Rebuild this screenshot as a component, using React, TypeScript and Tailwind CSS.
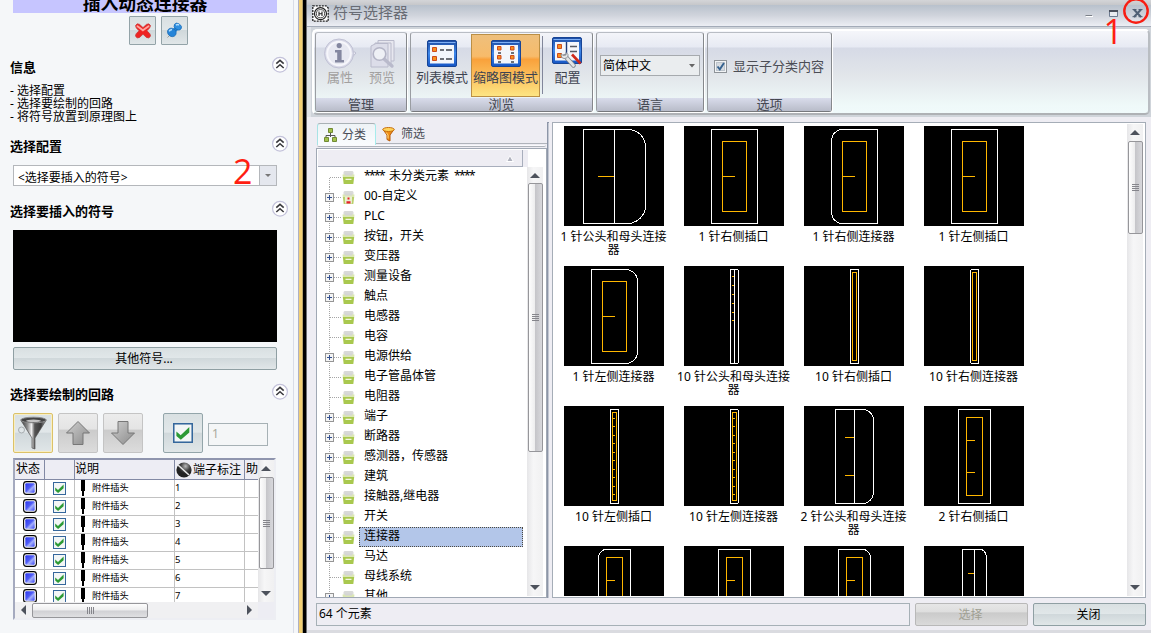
import React from "react";

const SILVER = "bg-[linear-gradient(180deg,#d9e0e2_0%,#e1e7e9_48%,#d0d8db_50%,#e0e6e8_100%)]";
const V_TRACK = "bg-[linear-gradient(90deg,#e6e6e8_0%,#f6f6f7_40%,#f0f0f1_100%)]";
const V_THUMB = "bg-[linear-gradient(90deg,#fdfdfd_0%,#ededee_45%,#c6c6ca_50%,#d8d8dc_100%)]";
const YELLOW = "#ffb700";

function Triangle({ dir }: { dir: "up" | "down" | "left" | "right" }) {
  const d = { up: "M0 5 5 0 10 5Z", down: "M0 0H10L5 5Z", left: "M5 0V10L0 5Z", right: "M0 0 5 5 0 10Z" }[dir];
  const flat = dir === "up" || dir === "down";
  const w = flat ? 10 : 5;
  const h = flat ? 5 : 10;
  return (
    <svg width={w} height={h} viewBox={`0 0 ${w} ${h}`} className="shrink-0">
      <path d={d} fill="#4d525c" />
    </svg>
  );
}

function Grip({ vertical }: { vertical?: boolean }) {
  return (
    <svg width="7" height="7" shapeRendering="crispEdges" className="shrink-0">
      <path
        d={vertical ? "M.5 0V7M2.5 0V7M4.5 0V7M6.5 0V7" : "M0 .5H7M0 2.5H7M0 4.5H7M0 6.5H7"}
        stroke="#85858b"
      />
    </svg>
  );
}

function VScroll({ thumb, button = "h-4" }: { thumb: string; button?: string }) {
  return (
    <div className={`flex w-4 shrink-0 flex-col items-center ${V_TRACK}`}>
      <div className={`flex w-full shrink-0 items-center justify-center ${button}`}>
        <Triangle dir="up" />
      </div>
      <div className={`flex w-[15px] items-center justify-center rounded-[2px] border border-[#96969a] ${V_THUMB} ${thumb}`}>
        <Grip />
      </div>
      <div className="flex-1" />
      <div className="flex h-[18px] items-center justify-center">
        <Triangle dir="down" />
      </div>
    </div>
  );
}

function Heading({ children }: { children: React.ReactNode }) {
  return (
    <div className="flex h-6 items-center justify-between">
      <span className="pt-[5px] text-[13px] leading-[18px] font-bold text-black">{children}</span>
      <svg width="16" height="17" viewBox="0 0 16 17">
        <circle cx="8" cy="8.7" r="7.4" fill="#fff" stroke="#c3c2da" strokeWidth="1.2" />
        <path d="M4.3 7.6 8 4.3 11.7 7.6M4.3 12 8 8.7 11.7 12" fill="none" stroke="#3a3a3e" strokeWidth="1.6" />
      </svg>
    </div>
  );
}

function Check({ size }: { size: number }) {
  return (
    <svg width={size} height={size} viewBox="0 0 13 13">
      <rect x=".5" y=".5" width="12" height="12" fill="#f3f6f6" stroke="#35679c" />
      <path d="M2.2 5.6 5 8 10.6 2.6V6.2L5.1 10.9 2.2 8.4Z" fill="#2c9a35" />
    </svg>
  );
}

function FunnelIcon() {
  return (
    <svg width="32" height="34" viewBox="0 0 32 34">
      <defs>
        <linearGradient id="steel">
          <stop offset="0" stopColor="#3b3b3b" />
          <stop offset=".25" stopColor="#8a8a8a" />
          <stop offset=".42" stopColor="#eee" />
          <stop offset=".55" stopColor="#555" />
          <stop offset=".8" stopColor="#3b3b3b" />
          <stop offset="1" stopColor="#aaa" />
        </linearGradient>
      </defs>
      <circle cx="4.5" cy="14" r="3" fill="none" stroke="#a7adb0" />
      <path d="M4 4.5 15 22v10l3 1V22L29 4.5Z" fill="url(#steel)" stroke="#555" strokeWidth=".7" />
      <ellipse cx="16.5" cy="4" rx="12.8" ry="2.8" fill="#444" stroke="#8c8c8c" />
      <ellipse cx="16.5" cy="4.8" rx="7.5" ry="1.2" fill="#c4c4c4" />
    </svg>
  );
}

function ArrowIcon({ down }: { down?: boolean }) {
  return (
    <svg width="26" height="26" viewBox="0 0 26 26">
      <defs>
        <linearGradient id="arrowGrey" x2="1" y2="1">
          <stop offset="0" stopColor="#cfcfcf" />
          <stop offset="1" stopColor="#8b8b8b" />
        </linearGradient>
      </defs>
      <path
        d={down ? "M8 1.5H18V13H24.5L13 24.5 1.5 13H8Z" : "M8 24.5H18V13H24.5L13 1.5 1.5 13H8Z"}
        fill="url(#arrowGrey)"
        stroke="#777"
      />
    </svg>
  );
}

function CircuitTable() {
  const rows = ["1", "2", "3", "4", "5", "6", "7"];
  return (
    <div className="ml-[3px] flex h-[162px] w-[263px] flex-col border-2 border-t-[#8f95ae] border-r-[#edeef3] border-b-[#edeef3] border-l-[#a5aabf] bg-[#ededf3]">
      <div className="flex h-[142px]">
        <div className="w-[243px] shrink-0 overflow-hidden bg-white text-black">
          <div className="flex h-5 border-b border-[#8289a4] bg-[#ededf4] text-[12px] leading-[18px] whitespace-nowrap">
            <div className="w-[30px] border-r border-[#8289a4] pl-[1px]">状态</div>
            <div className="w-[30px] border-r border-[#8289a4]" />
            <div className="w-[100px] border-r border-[#8289a4]">说明</div>
            <div className="flex w-[70px] items-center border-r border-[#8289a4]">
              <svg width="17" height="16" viewBox="0 0 17 16" className="mr-[1px] shrink-0">
                <defs>
                  <radialGradient id="ball" cx=".6" cy=".25">
                    <stop offset="0" stopColor="#bbb" />
                    <stop offset=".6" stopColor="#444" />
                    <stop offset="1" stopColor="#222" />
                  </radialGradient>
                </defs>
                <circle cx="9" cy="8" r="7.6" fill="url(#ball)" />
                <path d="M3 3 14 13" stroke="#e8e8e8" strokeWidth="1.6" />
              </svg>
              端子标注
            </div>
            <div className="pl-[1px]">助</div>
          </div>
          {rows.map((n) => (
            <div key={n} className="flex h-[18px] border-b border-[#c2c2c2]">
              <div className="flex w-[30px] items-start justify-center border-r border-[#c2c2c2] pt-[1px]">
                <svg width="14" height="14" viewBox="0 0 14 14">
                  <defs>
                    <linearGradient id="state" x2="1" y2="1">
                      <stop offset="0" stopColor="#2b36ee" />
                      <stop offset=".45" stopColor="#4f5cf6" />
                      <stop offset=".62" stopColor="#a5b0fc" />
                      <stop offset="1" stopColor="#3440f0" />
                    </linearGradient>
                  </defs>
                  <rect x=".6" y=".6" width="12.8" height="12.8" rx="2.8" fill="#fff" stroke="#000" strokeWidth="1.1" />
                  <rect x="2.3" y="2.3" width="9.4" height="9.4" rx="1" fill="url(#state)" />
                </svg>
              </div>
              <div className="flex w-[30px] items-center justify-center border-r border-[#c2c2c2]">
                <Check size={13} />
              </div>
              <div className="flex w-[100px] items-start border-r border-[#c2c2c2]">
                <svg width="4" height="16" className="mr-[7px] ml-[6px]">
                  <path d="M0 0H4V11H3V16H1V11H0Z" fill="#000" />
                </svg>
                <span className="text-[9.2px] leading-[15px]">附件插头</span>
              </div>
              <div className="w-[70px] border-r border-[#c2c2c2] text-[9.5px] leading-[15px]">{n}</div>
            </div>
          ))}
        </div>
        <VScroll thumb="h-[92px]" button="h-[17px]" />
      </div>
      <div className="flex h-4 w-[243px] items-center bg-[#f0f0f2]">
        <div className="flex w-[17px] justify-center">
          <Triangle dir="left" />
        </div>
        <div className="flex h-[15px] w-[116px] items-center justify-center rounded-[2px] border border-[#96969a] bg-[linear-gradient(180deg,#fdfdfd,#ededee_48%,#d0d0d4_52%,#e0e0e2)]">
          <Grip vertical />
        </div>
        <div className="flex flex-1 justify-end pr-[6px]">
          <Triangle dir="right" />
        </div>
      </div>
    </div>
  );
}

function LeftPanel() {
  return (
    <aside className="flex w-[299px] shrink-0 border-r border-[#aeb1c4] bg-[#f5f7f9]">
      <div className="w-[294px] border-r border-[#d9dce6] pr-[5px] pl-[10px]">
        <div className="ml-[3px] flex h-[13px] w-[264px] items-end justify-center overflow-hidden bg-[#c6c5ff] text-[17.8px] leading-[22px] font-bold text-black">
          <span className="-mb-px whitespace-nowrap">插入动态连接器</span>
        </div>
        <div className="mt-[3px] ml-[119px] flex gap-[5px]">
          <div className={`flex h-[29px] w-[27px] items-center justify-center rounded-[1px] border border-[#93a3a8] ${SILVER}`}>
            <svg width="18" height="18" viewBox="0 0 18 18">
              <path
                d="M1.6 3.6Q2.7.6 5.6 2.4L9 5.6 12.4 2.4Q15.4.8 16.5 3.6 16.6 5.6 12.9 8.8 17 12 16.5 14.2 15 17 12.4 15.4L9 12.2 5.6 15.4Q3 17 1.5 14.2 1 12 5.1 8.8 1.2 5.6 1.6 3.6Z"
                fill="#ee2222"
                stroke="#c94040"
                strokeWidth=".8"
              />
              <path d="M3.5 4.2 8.9 8.2 14.5 4.2" stroke="#ffa39c" strokeWidth="2" fill="none" strokeLinecap="round" />
            </svg>
          </div>
          <div className={`flex h-[29px] w-[27px] items-center justify-center rounded-[1px] border border-[#93a3a8] ${SILVER}`}>
            <svg width="17" height="17" viewBox="0 0 17 17">
              <path d="M5 12 1.5 15.5" stroke="#999" />
              <path d="M7 7 10 3.5 13.5 6.5 10 10Z" fill="#1f7fd0" />
              <ellipse cx="11.8" cy="4.6" rx="4" ry="3" transform="rotate(35 11.8 4.6)" fill="#2e8fe0" stroke="#1464ae" strokeWidth=".6" />
              <ellipse cx="5.8" cy="10.4" rx="4.6" ry="4" transform="rotate(40 5.8 10.4)" fill="#2584d8" stroke="#1464ae" strokeWidth=".6" />
              <path d="M3.2 9.4Q4 7.5 6 7.8M10 3.2Q11.5 2 13 3" stroke="#b5e0ff" strokeWidth="1.6" fill="none" />
            </svg>
          </div>
        </div>
        <div className="mt-[7px] w-[278px]">
          <Heading>信息</Heading>
        </div>
        <ul className="mt-2 text-[12px] leading-[13px] text-black">
          <li>- 选择配置</li>
          <li>- 选择要绘制的回路</li>
          <li>- 将符号放置到原理图上</li>
        </ul>
        <div className="mt-[8px] w-[278px]">
          <Heading>选择配置</Heading>
        </div>
        <div className="relative mt-[10px] ml-[3px] flex h-[21px] w-[264px] border border-[#b4b7bb] bg-white">
          <div className="flex-1 pt-[2px] pl-1 text-[12px] leading-[19px] text-black">&lt;选择要插入的符号&gt;</div>
          <div className="flex w-[17px] items-center justify-center border-l border-[#b4b7bb] bg-[#e4e7ee]">
            <svg width="6" height="3">
              <path d="M0 0H6L3 3Z" fill="#777" />
            </svg>
          </div>
          <span className="absolute top-[-15px] left-[219px] font-['Open_Sans',sans-serif] text-[34px] leading-[40px] text-[#ff1e12]">2</span>
        </div>
        <div className="mt-[10px] w-[278px]">
          <Heading>选择要插入的符号</Heading>
        </div>
        <div className="mt-[10px] ml-[3px] h-[112px] w-[264px] bg-black" />
        <div className={`mt-[5px] ml-[3px] h-[23px] w-[264px] rounded-[2px] border border-[#8f9fa3] pr-[2px] text-center text-[12px] leading-[22px] text-black ${SILVER}`}>
          其他符号...
        </div>
        <div className="mt-[9px] w-[278px]">
          <Heading>选择要绘制的回路</Heading>
        </div>
        <div className="mt-[10px] mb-[5px] ml-[3px] flex h-10 items-center">
          <div className={`flex h-10 w-10 items-center justify-center rounded-[2px] border border-[#dcc268] shadow-[inset_0_0_0_1px_#f7eec4] ${SILVER}`}>
            <FunnelIcon />
          </div>
          <div className="ml-[5px] flex h-10 w-10 items-center justify-center rounded-[2px] border border-[#c4c4c4] bg-[linear-gradient(180deg,#ececec_0%,#e4e4e4_40%,#cbcbcb_42%,#dcdcdc_100%)]">
            <ArrowIcon />
          </div>
          <div className="ml-[5px] flex h-10 w-10 items-center justify-center rounded-[2px] border border-[#c4c4c4] bg-[linear-gradient(180deg,#ececec_0%,#e4e4e4_40%,#cbcbcb_42%,#dcdcdc_100%)]">
            <ArrowIcon down />
          </div>
          <div className={`ml-5 flex h-10 w-10 items-center justify-center rounded-[2px] border border-[#93a5aa] ${SILVER}`}>
            <Check size={20} />
          </div>
          <div className="mt-[2px] ml-[5px] h-[23px] w-[60px] border border-[#a6b1b5] bg-[#f4f6f7] pl-[3px] text-[12px] leading-[20px] text-[#a9a99c]">1</div>
        </div>
        <CircuitTable />
      </div>
    </aside>
  );
}

function WindowIcon({ mode }: { mode: "list" | "thumb" | "config" }) {
  return (
    <svg width="31" height="31" viewBox="0 0 31 31">
      <defs>
        <linearGradient id="winBlue" y2="1" x2="0">
          <stop offset="0" stopColor="#1c4ba2" />
          <stop offset=".5" stopColor="#3f88ea" />
          <stop offset="1" stopColor="#1555c4" />
        </linearGradient>
      </defs>
      <rect x=".5" y=".5" width="29" height="26" rx="1.5" fill="url(#winBlue)" stroke="#174596" />
      <path d="M1.5 2.5H28.5" stroke="#7fb0f4" />
      <rect x="3" y="5" width="24" height="18.5" fill="#f3f6fb" />
      {mode === "list" && (
        <g>
          <path d="M5.5 7.5H9.5V11.5H5.5ZM5.5 16.5H9.5V20.5H5.5Z" fill="#f7901c" stroke="#cc4a1e" />
          <path d="M13 10H17M19 10H25M13 19H17M19 19H25" stroke="#41444c" strokeWidth="1.3" />
        </g>
      )}
      {mode === "thumb" && (
        <g>
          <path d="M6.5 6.5H10V10H6.5ZM19.5 6.5H23V10H19.5ZM6.5 15.5H10V19H6.5ZM19.5 15.5H23V19H19.5Z" fill="#f7901c" stroke="#cc4a1e" />
          <path d="M7 13H10M20 13H23M7 22H10M20 22H23" stroke="#41444c" strokeWidth="1.3" />
        </g>
      )}
      {mode === "config" && (
        <g>
          <path d="M14.5 5V20" stroke="#1d3b78" strokeWidth="1.4" />
          <path d="M5.5 7.5H9.5V11.5H5.5ZM5.5 16.5H9.5V20.5H5.5Z" fill="#f7901c" stroke="#cc4a1e" />
          <path d="M18 9.5H25M18 14.5H25" stroke="#555963" strokeWidth="1.5" />
          <path d="M20 17.5 28.5 26.5" stroke="#cf2a1c" strokeWidth="2.6" />
          <path d="M13 19 21.5 28.5" stroke="#7f838a" strokeWidth="4.4" strokeLinecap="round" />
          <path d="M13 19 21.5 28.5" stroke="#e3e5e8" strokeWidth="2.8" strokeLinecap="round" />
          <path d="M9 17Q9 21.5 12.5 21.5 16.5 21 16 17.5L14 15.5 14 18 11.5 18.5Z" fill="#e3e5e8" stroke="#7f838a" strokeWidth=".8" />
        </g>
      )}
    </svg>
  );
}

function RibbonGroup({ title, className, children }: { title: string; className: string; children?: React.ReactNode }) {
  return (
    <section className={`flex h-[80px] shrink-0 flex-col rounded-[3px] border border-t-[#b9bdc4] border-r-[#85888c] border-b-[#76787c] border-l-[#9a9da2] shadow-[1px_1px_0_#fff] ${className}`}>
      <div className="flex h-[65px]">{children}</div>
      <div className="h-[13px] bg-[linear-gradient(180deg,#d9dceb,#b8bcc9)] text-center text-[13px] leading-[13px] text-[#454852]">{title}</div>
    </section>
  );
}

function RibbonButton({ label, className, disabled, children }: { label: string; className: string; disabled?: boolean; children: React.ReactNode }) {
  return (
    <div className={`flex shrink-0 flex-col items-center text-[13px] whitespace-nowrap ${disabled ? "text-[#a2a09f]" : "text-[#3e4350]"} ${className}`}>
      <div className="flex h-[31px] justify-center">{children}</div>
      <span className="leading-[16px]">{label}</span>
    </div>
  );
}

function Ribbon() {
  return (
    <div className="flex h-[86px] w-[838px] rounded-[5px] border-2 border-t-[#fff] border-r-[#b9bdc2] border-b-[#aeb1b5] border-l-[#fff] bg-[linear-gradient(180deg,#f5f6fa_0px,#e7eaf3_16px,#d6dae6_17px,#e2e6ea_45px,#eff9f9_74px,#f0fafb_100%)] pt-[1px] pl-[1px]">
      <RibbonGroup title="管理" className="w-[92px]">
        <RibbonButton label="属性" disabled className="ml-1 w-[40px] pt-[5px]">
          <svg width="33" height="31" viewBox="0 0 33 31">
            <path d="M22 8 32 15 24 24Z" fill="#e8e8f2" stroke="#bcbdd0" />
            <circle cx="15" cy="15.5" r="14.5" fill="#d9dae8" stroke="#c0c1d4" />
            <circle cx="15" cy="15.5" r="11.8" fill="#e7e8f1" stroke="#f6f6fb" strokeWidth="2" />
            <circle cx="15.2" cy="7.6" r="2.6" fill="#8487a0" />
            <path d="M11 12H17.6V22H20V24.5H11V22H13.2V14.5H11Z" fill="#8487a0" />
          </svg>
        </RibbonButton>
        <RibbonButton label="预览" disabled className="ml-[2px] w-[40px] pt-[5px]">
          <svg width="28" height="31" viewBox="0 0 28 31">
            <path d="M10 2.5H26V23H10Z" fill="#e7e7ef" stroke="#b9bacb" />
            <path d="M7 5H23V26H7Z" fill="#e7e7ef" stroke="#b9bacb" />
            <path d="M3 8 8 5.5H20V29H3Z" fill="#dcdde9" stroke="#b9bacb" />
            <path d="M15 20 24 28" stroke="#b9bacb" strokeWidth="3.4" strokeLinecap="round" />
            <circle cx="11.5" cy="16" r="6.3" fill="#eef0f5" stroke="#b4b5c6" strokeWidth="1.6" />
          </svg>
        </RibbonButton>
      </RibbonGroup>
      <RibbonGroup title="浏览" className="ml-[3px] w-[183px]">
        <RibbonButton label="列表模式" className="w-[60px] pt-[5px] pl-[2px]">
          <div className="pt-[2px] pl-[1px]"><WindowIcon mode="list" /></div>
        </RibbonButton>
        <div className="mt-[1px] h-[63px] w-[70px] border border-[#bb8f45] bg-[linear-gradient(180deg,#eebf7c_0%,#f7bb6a_35%,#f9a13b_40%,#fbc25f_70%,#fde583_100%)]">
          <RibbonButton label="缩略图模式" className="w-[67px] pt-[3px]">
            <div className="pt-[2px] pl-[1px]"><WindowIcon mode="thumb" /></div>
          </RibbonButton>
        </div>
        <div className="mt-[3px] ml-[2px] h-[58px] w-px bg-[#81869a]" />
        <RibbonButton label="配置" className="w-[49px] pt-[5px]">
          <div className="-mt-[1px]"><WindowIcon mode="config" /></div>
        </RibbonButton>
      </RibbonGroup>
      <RibbonGroup title="语言" className="ml-[3px] w-[108px]">
        <div className="mt-[22px] ml-[3px] flex h-[21px] w-[100px] items-center justify-between border border-[#a6aaae] bg-[#eaedef] pr-[4px] pl-[2px] text-[12px] leading-[20px] text-black">
          简体中文
          <svg width="6" height="4"><path d="M0 0H6L3 3.5Z" fill="#666" /></svg>
        </div>
      </RibbonGroup>
      <RibbonGroup title="选项" className="ml-[3px] w-[125px]">
        <div className="mt-[23px] ml-[6px] flex h-[20px] items-center text-[13px] leading-[20px] whitespace-nowrap text-[#4b4d55]">
          <svg width="13" height="13" className="mr-[6px]">
            <rect x=".5" y=".5" width="12" height="12" fill="#f2f4f6" stroke="#8e9398" />
            <rect x="2.5" y="2.5" width="8" height="8" fill="#d5dae0" stroke="#bdc4cc" />
            <path d="M3.5 6.5 5.8 9.3 10 3" stroke="#35628f" strokeWidth="1.9" fill="none" />
          </svg>
          显示子分类内容
        </div>
      </RibbonGroup>
    </div>
  );
}

type TreeItem = { name: string; stars?: boolean; leaf?: boolean; custom?: boolean; selected?: boolean };
const TREE: TreeItem[] = [
  { name: "未分类元素", stars: true, leaf: true },
  { name: "00-自定义", custom: true },
  { name: "PLC" },
  { name: "按钮，开关" },
  { name: "变压器" },
  { name: "测量设备" },
  { name: "触点" },
  { name: "电感器", leaf: true },
  { name: "电容", leaf: true },
  { name: "电源供给" },
  { name: "电子管晶体管", leaf: true },
  { name: "电阻器", leaf: true },
  { name: "端子" },
  { name: "断路器" },
  { name: "感测器，传感器" },
  { name: "建筑" },
  { name: "接触器,继电器" },
  { name: "开关" },
  { name: "连接器", selected: true },
  { name: "马达" },
  { name: "母线系统", leaf: true },
  { name: "其他" },
];

function TreeRow({ item, first }: { item: TreeItem; first: boolean }) {
  return (
    <div className="flex h-5 items-center">
      <svg width="41" height="20" shapeRendering="crispEdges" className="shrink-0">
        <path d={first ? "M11.5 11V20" : "M11.5 0V20"} stroke="#a5a5a5" strokeDasharray="1 1" />
        <path d="M12 10.5H23" stroke="#a5a5a5" strokeDasharray="1 1" />
        {!item.leaf && (
          <g>
            <rect x="7.5" y="6.5" width="8" height="8" fill="#f4f4f4" stroke="#959595" />
            <path d="M9 10.5H14M11.5 8V13" stroke="#33508f" />
          </g>
        )}
        <g shapeRendering="auto">
          <path d="M25.5 5 26.5 4H34.5L35.5 5V8H25.5Z" fill="#d9dad8" />
          <path d="M24.5 7.5H36.5L36.2 10H24.8Z" fill="#dbe7b3" />
          <path d="M27 6.5H34V8.5H27Z" fill="#d4d5d5" />
          <path d="M24.8 10H36.2L35.3 17H25.7Z" fill={item.custom ? "#b9d06c" : "#a9c84e"} />
          {item.custom ? (
            <g>
              <path d="M27 9.5H34V16.5H27Z" fill="#e9eecf" />
              <path d="M29.5 10.5H31.5V12.5H29.5ZM28.5 14.2H32.5V16.5H28.5Z" fill="#e8202a" />
            </g>
          ) : (
            <path d="M27.5 12.3H33.5" stroke="#fff" strokeWidth="1.1" />
          )}
        </g>
      </svg>
      <div
        className={`h-5 flex-1 border pl-1 text-[12px] leading-[16px] whitespace-nowrap text-black ${
          item.selected ? "border-dotted border-[#4d4a40] bg-[#b3c6e9]" : "border-transparent"
        }`}
      >
        {item.stars ? (
          <>
            <span className="tracking-[-1.6px]">****</span>
            <span className="mx-[5px]">{item.name}</span>
            <span className="tracking-[-1.6px]">****</span>
          </>
        ) : (
          item.name
        )}
      </div>
    </div>
  );
}

function CategoryPane() {
  return (
    <div className="flex w-[231px] shrink-0 flex-col text-[#4a4d57]">
      <div className="flex h-[22px] text-[12px] leading-[20px]">
        <div className="ml-[1px] flex w-[59px] items-center rounded-t-[3px] border border-b-0 border-t-[#a9b1b5] border-r-[#a6ecec] border-l-[#a8e3e5] bg-[linear-gradient(180deg,#eef3f6,#fafcfe)] pl-[6px]">
          <svg width="13" height="14" viewBox="0 0 13 14" className="mr-[5px]">
            <path d="M6.5 4V9M2 10V7.5H11V10" stroke="#555" fill="none" />
            <path d="M4.5 .5H8.5V4.5H4.5ZM.5 9.5H4.5V13.5H.5ZM8.5 9.5H12.5V13.5H8.5Z" fill="#a2c14a" stroke="#718a35" />
          </svg>
          分类
        </div>
        <div className="mb-[1px] flex flex-1 items-center border-b border-[#b0b4bb] pt-[2px] pl-[6px]">
          <svg width="13" height="15" viewBox="0 0 13 15" className="mr-[6px]">
            <path d="M1 2.5 5 8V12.5L8 14V8L12 2.5Z" fill="#f08c14" stroke="#b75a08" />
            <ellipse cx="6.5" cy="2.5" rx="5.7" ry="2" fill="#ffd45c" stroke="#c76e0c" />
            <path d="M4.2 5.5 6 8V11.5" stroke="#ffd980" fill="none" />
          </svg>
          筛选
        </div>
      </div>
      <div className="mx-[1px] h-[2px] rounded-b-[2px] border-b border-[#b0b4bb] bg-[#fafafd]" />
      <div className="mt-[1px] flex h-[450px] flex-col border border-[#a0a8b4] bg-white">
        <div className="mt-[1px] ml-[1px] flex">
          <div className="flex h-[17px] w-[205px] items-center justify-end border-r border-b border-[#a8aebc] bg-[#eeedf3] pr-2">
            <svg width="8" height="7"><path d="M0 7 4 0 8 7Z" fill="#fff" /><path d="M1.5 6 4 1.5 6.5 6Z" fill="#b0b2be" /></svg>
          </div>
          <div className="h-[17px] w-[5px] bg-[#eeedf3]" />
        </div>
        <div className="flex min-h-0 flex-1">
          <div className="w-[206px] overflow-hidden pl-[1px]">
            {TREE.map((t, i) => (
              <TreeRow key={t.name} item={t} first={i === 0} />
            ))}
          </div>
          <div className="ml-[4px] flex h-[429px]">
            <VScroll thumb="h-[269px]" button="h-4" />
          </div>
        </div>
      </div>
    </div>
  );
}

type Sym = { label: string; tail?: string; white: string; gold: string };
const OPEN_10 = "M48.5 6.5H52.5V94.5H48.5Z";
const TICKS_10 = "M49 12.5H51M49 20.5H51M49 29.5H51M49 37.5H51M49 46.5H51M49 54.5H51M49 63.5H51M49 71.5H51M49 80.5H51M49 88.5H51";
const INNER_1 = "M38.5 15.5H62.5V85.5H38.5ZM38 50.5H51";
const BOX_1 = "M27.5 3.5H73.5V97.5H27.5Z";
const INNER_3 = "M42.5 11.5H58.5V89.5H42.5ZM42 34.5H51";
const SYMBOLS: Sym[] = [
  { label: "1 针公头和母头连接", tail: "器", white: "M50.5 3.5V97.5M19.5 3.5H66.5Q79 6 81.5 18.5V82.5Q79 94 66.5 97.5H19.5Z", gold: "M34 50.5H50" },
  { label: "1 针右侧插口", white: BOX_1, gold: INNER_1 },
  { label: "1 针右侧连接器", white: "M73.5 3.5H36.5Q28.5 6 27.5 13.5V87.5Q28.5 95 36.5 97.5H73.5Z", gold: INNER_1 },
  { label: "1 针左侧插口", white: BOX_1, gold: INNER_1 },
  { label: "1 针左侧连接器", white: "M27.5 3.5H63.5Q72.5 6 73.5 13.5V87.5Q72.5 95 63.5 97.5H27.5Z", gold: INNER_1 },
  { label: "10 针公头和母头连接", tail: "器", white: "M50.5 3.5V97.5M46.5 3.5H53.5L54.5 4.5V96.5L53.5 97.5H46.5Z", gold: "M48 10.5H50M48 19.5H50M48 28.5H50M48 37.5H50M48 46.5H50M48 54.5H50" },
  { label: "10 针右侧插口", white: "M46.5 3.5H54.5V97.5H46.5Z", gold: OPEN_10 },
  { label: "10 针右侧连接器", white: "M54.5 3.5H47.5L46.5 4.5V96.5L47.5 97.5H54.5Z", gold: OPEN_10 },
  { label: "10 针左侧插口", white: "M46.5 3.5H54.5V97.5H46.5Z", gold: OPEN_10 + TICKS_10 },
  { label: "10 针左侧连接器", white: "M46.5 3.5H53.5L54.5 4.5V96.5L53.5 97.5H46.5Z", gold: OPEN_10 + TICKS_10 },
  { label: "2 针公头和母头连接", tail: "器", white: "M50.5 3.5V97.5M31.5 3.5H60.5Q68 5.5 69.5 12.5V87.5Q68 95.5 60.5 97.5H31.5Z", gold: "M41 31.5H50M41 69.5H50" },
  { label: "2 针右侧插口", white: "M34.5 3.5H66.5V97.5H34.5Z", gold: "M42.5 11.5H58.5V89.5H42.5ZM42 34.5H51M42 66.5H51" },
  { label: "", white: "M66.5 3.5H40.5Q36 5 34.5 10.5V97.5H66.5Z", gold: INNER_3 },
  { label: "", white: "M34.5 3.5H66.5V97.5H34.5Z", gold: INNER_3 },
  { label: "", white: "M34.5 3.5H60.5Q65 5 66.5 10.5V97.5H34.5Z", gold: INNER_3 },
  { label: "", white: "M50.5 3.5V97.5M38.5 3.5H57.5Q61.5 5 62.5 10.5V97.5H38.5Z", gold: "M44 27.5H50" },
];

function SymbolGrid() {
  return (
    <div className="flex h-[476px] w-[594px] justify-between border border-[#a5adb7] bg-white pt-[1px] pr-[2px]">
      <div className="ml-[1px] grid h-[472px] w-[480px] auto-rows-[140px] grid-cols-4 overflow-hidden pt-[2px]">
        {SYMBOLS.map((s, i) => (
          <figure key={i} className="flex flex-col items-center">
            <svg width="100" height="100" shapeRendering="crispEdges" fill="none" className="shrink-0 bg-black">
              <path d={s.white} stroke="#fff" />
              <path d={s.gold} stroke={YELLOW} />
            </svg>
            <figcaption className="mt-[4px] -ml-[1px] text-center text-[12px] leading-[13px] whitespace-nowrap text-black">
              {s.label}
              {s.tail && <div>{s.tail}</div>}
            </figcaption>
          </figure>
        ))}
      </div>
      <div className="flex h-[472px]">
        <VScroll thumb="h-[93px]" button="h-[17px]" />
      </div>
    </div>
  );
}

function TitleBar() {
  return (
    <header className="relative flex h-[27px] items-center border-b border-[#a3abb8] bg-[linear-gradient(180deg,#d4d5d8_0px,#c6c7ca_5px,#b8c1cc_5px,#cfd3db_15px,#eceef4_26px)]">
      <svg width="17" height="17" viewBox="0 0 17 17" className="ml-[5px]">
        <path d="M.8 .8H14L16.2 3V16.2H.8Z" fill="#fff" stroke="#222" strokeDasharray="2 1" strokeWidth="1.3" />
        <circle cx="8.5" cy="8.7" r="6" fill="none" stroke="#222" strokeWidth="1.2" />
        <circle cx="8.5" cy="8.7" r="4.1" fill="none" stroke="#222" strokeWidth=".8" />
        <path d="M7 6.5V11M10 6.5V11M7 8.7H10" stroke="#222" strokeWidth="1.1" />
      </svg>
      <span className="mb-[2px] ml-1 text-[15px] leading-[24px] text-[#696c74]">符号选择器</span>
      <svg width="70" height="26" viewBox="0 0 70 26" className="ml-auto">
        <path d="M4.5 15.5H11" stroke="#7b8088" />
        <path d="M5 16.5H12" stroke="#fff" />
        <path d="M28.5 11.5H36.5V16.5H28.5Z" fill="#e8ebf0" stroke="#6d7b90" />
        <path d="M28 11H37" stroke="#4a4f5c" strokeWidth="2" />
        <path d="M53 9.5 60 17M60 9.5 53 17" stroke="#4f5f74" strokeWidth="2" />
        <path d="M51.5 9.5H55.5M57.5 9.5H61.5M51.5 16.7H55.5M57.5 16.7H61.5" stroke="#4f5f74" />
      </svg>
      <svg width="26" height="27" className="absolute top-[-2px] right-[2px]">
        <circle cx="13" cy="13" r="11.7" fill="none" stroke="#f81d12" strokeWidth="2.4" />
      </svg>
      <span className="absolute top-[11px] right-[28px] z-10 font-['Open_Sans',sans-serif] text-[34px] leading-[40px] text-[#ff1e12]">1</span>
    </header>
  );
}

export default function App() {
  return (
    <div className="flex h-[633px] w-[1151px] overflow-hidden bg-white font-['Noto_Sans','Noto_Sans_CJK_SC',sans-serif]">
      <LeftPanel />
      <div className="flex w-[8px] shrink-0">
        <div className="w-[3px] bg-[#f2cf74]" />
        <div className="w-[1px] bg-[#b6a26b]" />
        <div className="w-[3px] bg-black" />
        <div className="w-[1px] bg-[#6e7075]" />
      </div>
      <main className="flex w-[844px] flex-col bg-[#eeedf3]">
        <TitleBar />
        <div className="flex h-[90px] justify-end border-l-4 border-[#dfe2e7] bg-[#cfd4da] pt-[2px] pr-[1px]">
          <Ribbon />
        </div>
        <div className="mt-[5px] flex h-[476px] pl-[9px]">
          <div className="pt-[1px]">
            <CategoryPane />
          </div>
          <div className="mr-[3px] w-[2px] border-t border-l border-[#8d96a8] bg-[#c3c8d2]" />
          <SymbolGrid />
        </div>
        <div className="mt-[5px] flex h-[23px] pl-[9px] text-[12px] leading-[20px]">
          <div className="w-[594px] border border-[#a6b0b6] pl-[2px] text-black">64 个元素</div>
          <div className="ml-[5px] w-[113px] rounded-[2px] border border-[#b8b8b8] bg-[linear-gradient(180deg,#e6e6e6_0%,#dedede_38%,#cacaca_42%,#dadada_100%)] pt-[1px] pr-[2px] text-center text-[#a0a093]">选择</div>
          <div className={`ml-[5px] w-[113px] rounded-[2px] border border-[#8f9fa3] pt-[1px] pr-[2px] text-center text-black ${SILVER}`}>关闭</div>
        </div>
        <div className="mt-[4px] h-[3px] bg-[#dadbe0]" />
      </main>
    </div>
  );
}
